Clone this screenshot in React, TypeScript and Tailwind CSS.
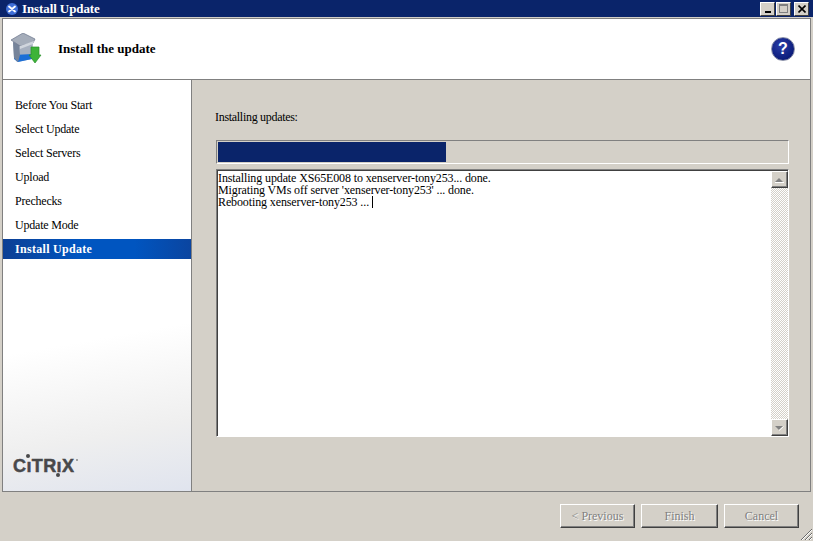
import { ReactNode } from "react";

const steps = [
  "Before You Start",
  "Select Update",
  "Select Servers",
  "Upload",
  "Prechecks",
  "Update Mode",
  "Install Update",
];

function CaptionButton({ children }: { children: ReactNode }) {
  return (
    <div className="w-[15px] h-[14px] bg-[#d4d0c8] border border-t-white border-l-white border-r-[#404040] border-b-[#404040] flex items-center justify-center">
      {children}
    </div>
  );
}

function BoxIcon() {
  return (
    <svg width="32" height="32" viewBox="0 0 32 32" className="shrink-0">
      <path d="M2 9 L22 9 L21 26 L6 29 L3 25 Z" fill="#a7b0bf" />
      <path d="M3 22 L21 21 L21 26 L7 29 L3 26 Z" fill="#1d6fd6" />
      <path d="M2 9 L8 12 L9 22 L7 29 L3 25 Z" fill="#76849a" />
      <path d="M0 7 L12 0 L24 6 L22 10 L9 13 Z" fill="#a5adba" stroke="#68728a" strokeWidth="0.7" />
      <path d="M9 13 L23 8 L22 11 L9 16 Z" fill="#d0d5dd" />
      <path d="M20 14 H28 V22 H30 L24 30 L18 22 H20 Z" fill="#3db338" stroke="#2a8f2a" strokeWidth="0.7" />
    </svg>
  );
}

function ScrollArrow({ down }: { down?: boolean }) {
  return (
    <div className="w-[17px] h-[17px] bg-[#d4d0c8] border border-t-white border-l-white border-r-[#404040] border-b-[#404040] shadow-[inset_-1px_-1px_0_#808080] flex items-center justify-center">
      <svg width="9" height="6" viewBox="0 0 9 6">
        <path d={down ? "M0 1 H8 L4 5 Z" : "M4 1 L8 5 H0 Z"} fill="#808080" />
        <path d={down ? "M4 5.5 L8.5 1.5" : "M0 5.5 H9"} stroke="#fff" strokeWidth="1" />
      </svg>
    </div>
  );
}

function WizardButton({ label, width }: { label: string; width: string }) {
  return (
    <div
      className={`${width} h-[24px] pb-px border border-t-white border-l-white border-r-[#404040] border-b-[#404040] shadow-[inset_-1px_-1px_0_#808080] flex items-center justify-center text-[#808080] [text-shadow:1px_1px_0_#fff]`}
    >
      {label}
    </div>
  );
}

export default function App() {
  return (
    <div className="relative w-[813px] h-[541px] overflow-hidden bg-[#d4d0c8] text-[12px] leading-[12px] text-black font-['Liberation_Serif','Noto_Sans_CJK_TC',serif]">
      {/* title bar */}
      <div className="h-[17px] bg-[#0a246a] flex items-center justify-between pl-[6px] pr-[4px]">
        <div className="flex items-center gap-[4px]">
          <svg width="12" height="12" viewBox="0 0 12 12" className="shrink-0">
            <circle cx="6" cy="6" r="6" fill="#3f6fd8" />
            <path d="M3 3.5 L9 8.5 M9 3.5 L3 8.5" stroke="#fff" strokeWidth="1.8" strokeLinecap="round" />
          </svg>
          <span className="text-white font-bold text-[13px] tracking-[-0.1px]">Install Update</span>
        </div>
        <div className="flex items-center">
          <CaptionButton>
            <div className="w-[6px] h-[2px] bg-black mt-[6px]" />
          </CaptionButton>
          <div className="w-px" />
          <CaptionButton>
            <div className="w-[9px] h-[9px] border border-[#808080] border-t-2" />
          </CaptionButton>
          <div className="w-[3px]" />
          <CaptionButton>
            <svg width="8" height="8" viewBox="0 0 8 8">
              <path d="M0.5 0.5 L7.5 7.5 M7.5 0.5 L0.5 7.5" stroke="#000" strokeWidth="1.6" />
            </svg>
          </CaptionButton>
        </div>
      </div>

      {/* wizard body */}
      <div className="mt-px ml-[2px] mr-[2px] h-[474px] border border-[#808080] flex flex-col">
        <div className="h-[61px] bg-white border-b border-[#808080] flex items-center pl-[8px] pr-[15px] shrink-0">
          <BoxIcon />
          <span className="ml-[15px] font-bold text-[13px]">Install the update</span>
          <div className="ml-auto w-[24px] h-[24px] rounded-full border border-[#8a90a8] bg-[radial-gradient(circle_at_40%_35%,#2a3ea8,#0a1a78_75%)] flex items-center justify-center text-white font-bold text-[16px] font-['Liberation_Sans',sans-serif]">
            ?
          </div>
        </div>

        <div className="flex-1 flex min-h-0">
          <div className="w-[189px] border-r border-[#808080] bg-[linear-gradient(170deg,#fff_62%,#efefef_84%,#e0e4ee_100%)] pt-[15px] flex flex-col justify-between shrink-0">
            <div className="flex flex-col gap-[4px] tracking-[-0.2px]">
              {steps.map((s, i) =>
                i === steps.length - 1 ? (
                  <div
                    key={s}
                    className="h-[20px] pl-[12px] flex items-center text-white font-bold tracking-[0.3px] bg-[linear-gradient(90deg,#0c3f94,#0055c0_40%,#0055c0_70%,#0b45a0)]"
                  >
                    {s}
                  </div>
                ) : (
                  <div key={s} className="h-[20px] pl-[12px] flex items-center">
                    {s}
                  </div>
                ),
              )}
            </div>
            <div className="relative ml-[10px] mb-[17px] w-fit font-bold text-[18px] leading-[16px] tracking-[0.4px] text-[#48484a] [-webkit-text-stroke:0.5px_#48484a] font-['Liberation_Sans',sans-serif]">
              CıTRıX
              <span className="absolute left-[13px] top-[-4px] w-[4px] h-[4px] rounded-full bg-[#48484a]" />
              <span className="absolute left-[43px] top-[15px] w-[4px] h-[4px] rounded-full bg-[#48484a]" />
              <span className="absolute left-[63px] top-[1px] w-[2px] h-[2px] rounded-full bg-[#8a8a8a]" />
            </div>
          </div>

          <div className="flex-1 pt-[31px] pl-[24px] pr-[21px] flex flex-col">
            <div className="h-[12px] ml-[-1px] tracking-[-0.3px]">Installing updates:</div>
            <div className="mt-[17px] h-[24px] border border-t-[#808080] border-l-[#808080] border-r-white border-b-white p-px">
              <div className="w-[228px] h-full bg-[#0a246a]" />
            </div>
            <div className="mt-[5px] h-[268px] border border-t-[#808080] border-l-[#808080] border-r-white border-b-white shadow-[inset_1px_1px_0_#404040] flex pl-px pt-px">
              <div className="flex-1 bg-white pt-px leading-[12px] tracking-[-0.12px]">
                <div>Installing update XS65E008 to xenserver-tony253... done.</div>
                <div>Migrating VMs off server 'xenserver-tony253' ... done.</div>
                <div>
                  Rebooting xenserver-tony253 ... <span className="inline-block w-px h-[12px] bg-black align-top" />
                </div>
              </div>
              <div className="w-[17px] flex flex-col justify-between bg-[repeating-conic-gradient(#d4d0c8_0_25%,#fff_0_50%)] bg-[length:2px_2px]">
                <ScrollArrow />
                <ScrollArrow down />
              </div>
            </div>
          </div>
        </div>
      </div>

      {/* footer buttons */}
      <div className="mt-[12px] pl-[560px] flex gap-[6px]">
        <WizardButton label="< Previous" width="w-[75px]" />
        <WizardButton label="Finish" width="w-[77px]" />
        <WizardButton label="Cancel" width="w-[75px]" />
      </div>

      <svg className="absolute right-0 bottom-0" width="14" height="14" viewBox="0 0 14 14">
        <path d="M2 13 L13 2 M6 13 L13 6 M10 13 L13 10" stroke="#6a6a6a" strokeWidth="1" />
        <path d="M3 13 L13 3 M7 13 L13 7 M11 13 L13 11" stroke="#fff" strokeWidth="1" />
      </svg>
    </div>
  );
}
